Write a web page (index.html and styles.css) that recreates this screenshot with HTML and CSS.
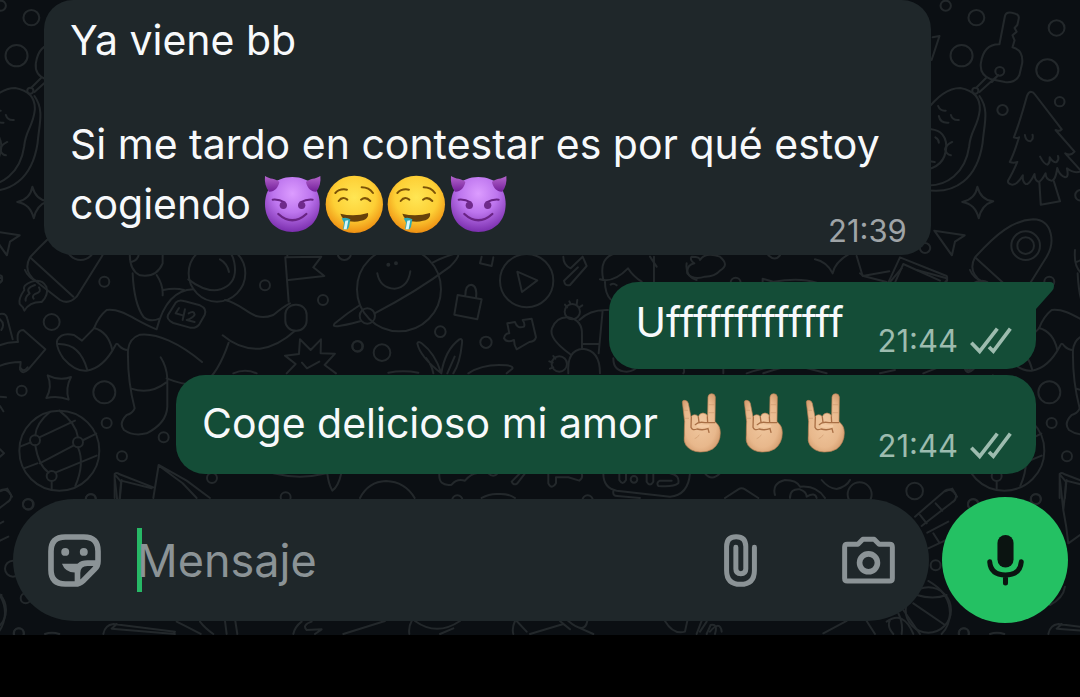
FILE: index.html
```html
<!DOCTYPE html>
<html lang="es">
<head>
  <meta charset="UTF-8">
  <meta name="viewport" content="width=device-width, initial-scale=1">
  <title>Chat</title>
  <link rel="stylesheet" href="styles.css">
</head>
<body>
  <svg class="sprites" aria-hidden="true">
    <defs>
      <radialGradient id="purple" cx="50%" cy="30%" r="70%">
        <stop offset="0" stop-color="#dc9cff"/>
        <stop offset=".5" stop-color="#bd75ee"/>
        <stop offset="1" stop-color="#7b2fae"/>
      </radialGradient>
      <linearGradient id="horn" x1="0" y1="0" x2="0" y2="1">
        <stop offset="0" stop-color="#b565cd"/>
        <stop offset="1" stop-color="#74209a"/>
      </linearGradient>
      <radialGradient id="yellow" cx="50%" cy="38%" r="62%">
        <stop offset="0" stop-color="#ffe654"/>
        <stop offset=".6" stop-color="#fdcf35"/>
        <stop offset="1" stop-color="#ee8f12"/>
      </radialGradient>
      <radialGradient id="skin" cx="48%" cy="50%" r="60%">
        <stop offset="0" stop-color="#f0c8a0"/>
        <stop offset=".7" stop-color="#e8b88c"/>
        <stop offset="1" stop-color="#d29a6c"/>
      </radialGradient>
    </defs>
    <symbol id="devil" viewBox="27 12 186 192">
      <path fill="url(#purple)" d="M118 33C172 33 200 70 200 114C200 165 165 198 118 198S36 165 36 114C36 70 64 33 118 33Z"/>
      <path fill="url(#horn)" d="M36 30C50 40 68 37 79 48C76 65 64 78 48 77C38 64 34 48 36 30ZM202 30C188 40 170 37 159 48C162 65 174 78 190 77C200 64 204 48 202 30Z"/>
      <g fill="none" stroke="#692384" stroke-width="6" stroke-linecap="round">
        <path d="M59 101Q77 99 95 109M179 101Q161 99 142 109"/>
        <path stroke-width="7" d="M76 144Q118 182 160 144"/>
      </g>
      <circle cx="91" cy="118" r="11" fill="#6f2a8b"/>
      <circle cx="146" cy="118" r="11" fill="#6f2a8b"/>
    </symbol>
    <symbol id="drool" viewBox="213 12 186 192">
      <circle cx="304" cy="115" r="86" fill="url(#yellow)"/>
      <g fill="none" stroke="#7b5207" stroke-width="6" stroke-linecap="round">
        <path d="M247 81Q260 67 282 71M326 64Q348 64 360 81M257 105Q268 90 283 101M324 101Q338 90 352 105"/>
      </g>
      <path fill="#67410a" d="M262 143Q304 153 345 141Q350 165 304 167Q268 167 262 143Z"/>
      <path fill="#2fa9b5" d="M266 157Q280 152 292 160L288 182L284 190H270L273 170Z"/>
      <path fill="#d9f7f7" d="M277 164L286 163L281 190H272Z"/>
    </symbol>
    <symbol id="horns" viewBox="6 6 186 192">
      <path fill="url(#skin)" stroke="#b98054" stroke-width="2" d="M43 45Q43 39 51 40Q59 41 61 49L69 90Q72 83 80 83Q87 83 91 89Q95 78 105 78Q114 78 119 88L120 30Q121 20 131 20Q141 20 142 30L141 104Q157 116 157 137Q157 169 134 186Q118 196 96 195Q68 194 54 175Q46 164 49 144Q49 118 50 104Z"/>
      <g fill="none" stroke="#a96f45" stroke-width="4" stroke-linecap="round">
        <path d="M70 91L69 121Q73 132 87 126M91 90L93 106M118 89L119 106M82 113Q91 103 111 107L140 107M87 126Q104 131 120 125L123 136"/>
      </g>
      <path fill="none" stroke="#f4cca5" stroke-width="8" stroke-linecap="round" d="M91 116Q105 119 120 117"/>
      <path fill="none" stroke="#cf9b70" stroke-width="2" d="M122 53H139M122 77H139M49 70H60M50 94H63M94 143Q88 153 80 155"/>
    </symbol>
    <symbol id="checks" viewBox="0 0 126 82">
      <g fill="none" stroke="currentColor" stroke-width="11">
        <path d="M4 46L29 72L82 4"/>
        <path d="M57 59L70 72L121 4"/>
      </g>
    </symbol>
  </svg>

  <main class="chat">
    <svg class="wallpaper" aria-hidden="true">
      <defs>
        <g id="doodles">
          <!-- avocado, key, tree -->
          <g transform="translate(540 0) scale(.3444 .3333)">
            <circle cx="1178" cy="17" r="15"/><circle cx="1267" cy="53" r="23"/><circle cx="1224" cy="167" r="32"/>
            <circle cx="1500" cy="84" r="23"/><circle cx="1473" cy="210" r="32"/><circle cx="1343" cy="330" r="15"/>
            <circle cx="1509" cy="305" r="14"/><circle cx="1335" cy="214" r="13"/><circle cx="1264" cy="272" r="9"/>
            <circle cx="1118" cy="744" r="15"/><circle cx="1570" cy="586" r="16"/>
            <path d="M1334 133L1350 48Q1353 35 1370 38Q1393 42 1390 56L1386 75L1378 84L1384 95L1372 106L1378 121L1372 142Q1404 150 1400 190L1392 225Q1380 250 1350 246L1310 238Q1276 225 1280 190Q1288 132 1334 133Z"/>
            <path d="M1295 234L1266 264M1330 226L1276 276M1312 246L1330 226"/>
            <path d="M1120 335Q1170 264 1220 264Q1280 275 1277 330C1272 380 1250 390 1246 440C1235 520 1180 560 1120 556"/>
            <path d="M1276 288C1305 330 1290 370 1285 430C1270 530 1210 590 1110 568M1110 388Q1178 380 1180 440Q1176 505 1110 510"/>
            <path d="M1156 318Q1162 334 1178 332M1158 348Q1162 370 1186 368M1193 345Q1198 362 1216 360M1148 412Q1158 418 1158 428M1197 426Q1178 436 1176 448Q1180 464 1193 466M1132 484L1146 486M1137 180L1160 108L1140 112"/>
            <path d="M1425 275Q1432 275 1436 282L1515 388Q1508 396 1497 390L1552 455Q1540 470 1525 460L1572 514Q1550 522 1530 505Q1536 532 1525 532Q1508 526 1502 504Q1496 545 1484 542Q1468 538 1468 520Q1454 548 1446 545Q1436 540 1436 522Q1420 556 1410 552Q1400 545 1402 526Q1385 556 1370 554Q1355 550 1360 540Q1372 520 1386 486Q1374 490 1364 486Q1376 462 1391 412Q1384 416 1376 412Q1392 370 1414 288Q1418 276 1425 275Z"/>
            <path d="M1408 405Q1410 424 1424 424Q1434 416 1430 404M1452 470Q1464 494 1474 494Q1482 485 1480 472Q1490 490 1500 486Q1508 478 1504 468M1450 548L1454 614L1510 604L1492 544"/>
            <path d="M1270 560Q1280 600 1316 604Q1282 615 1274 655Q1264 612 1226 606Q1264 598 1270 560Z"/>
            <path d="M1145 692L1233 706L1205 725L1196 766Z"/>
          </g>
          <!-- rocket -->
          <g transform="translate(880 230) scale(.3333)">
            <circle cx="437" cy="47" r="43"/><circle cx="437" cy="47" r="25"/>
            <path d="M285 82C350 10 400 -30 460 -32C520 -30 525 40 500 80L425 200Q400 225 375 210L305 155Q262 125 285 82L415 200"/>
            <path d="M290 155Q262 165 268 180Q250 205 254 222Q266 232 268 242Q284 215 320 216Q342 195 334 170Q320 145 290 155ZM300 165Q270 175 284 190Q270 200 272 212M312 172Q322 186 300 192Q290 198 296 206"/>
            <circle cx="508" cy="155" r="15"/>
          </g>
          <!-- astronaut, globe -->
          <g transform="translate(0 250) scale(.3333)">
            <circle cx="155" cy="216" r="24"/><circle cx="795" cy="106" r="15"/>
            <circle cx="969" cy="150" r="15"/><circle cx="65" cy="422" r="15"/><circle cx="313" cy="427" r="33"/>
            <circle cx="320" cy="519" r="15"/><circle cx="491" cy="562" r="15"/><circle cx="366" cy="619" r="15"/>
            <circle cx="636" cy="684" r="15"/><circle cx="273" cy="747" r="15"/><circle cx="857" cy="742" r="15"/>
            <circle cx="1072" cy="289" r="15"/><circle cx="574" cy="604" r="30"/>
            <path d="M-10 290Q20 275 54 276Q48 240 70 240L136 298L85 358Q68 375 60 358L62 336Q20 336 -10 352M0 192Q18 188 22 206L38 268M0 208Q16 222 4 240M0 440L18 442M0 468L10 484M0 598L12 610L0 620"/>
            <circle cx="651" cy="70" r="85"/><path d="M565 88Q620 130 662 118Q715 100 703 38Q698 10 682 0M660 28Q682 40 687 66"/>
            <path d="M390 0Q385 60 420 76Q470 84 488 40L488 0M396 35Q415 30 417 10M398 70Q402 160 430 200Q450 218 478 206M470 75Q490 105 488 136M490 120Q525 112 552 120M470 238Q500 120 580 118M470 238C400 210 370 175 320 180Q295 200 282 235L246 272L222 255Q185 246 172 270Q166 290 190 325Q225 365 260 362Q310 355 345 288Q350 275 358 288Q370 300 384 300"/>
            <path d="M282 234Q325 245 337 300M175 282Q240 280 262 360M606 336C540 280 470 248 420 254Q388 265 384 300Q382 390 404 475Q398 490 380 495Q355 520 372 540Q400 560 440 550Q500 520 502 470V385Q500 350 482 322M394 416Q450 435 498 398M500 385Q560 410 610 402Q655 370 686 278M668 256Q720 300 780 296Q835 288 885 242M675 150C740 165 755 220 820 195Q850 170 870 160"/>
            <path d="M527 158Q536 148 552 153L600 166Q622 176 614 195L598 223Q588 236 570 233L520 219Q498 208 504 195Z"/>
            <path d="M537 174L527 190L551 197M555 178L548 210M566 190Q582 180 584 194Q578 204 560 210L584 216"/>
            <rect x="856" y="164" width="64" height="78" rx="30"/>
            <path d="M866 155L856 22L964 20L940 52L973 78L866 90M862 20V12"/>
            <path d="M900 268L932 300L963 268L962 310L1005 311L974 345L1008 370M900 268L897 312L855 317L887 342L860 370M906 338L921 355L958 335M700 370Q735 355 770 370"/>
            <path d="M143 376Q180 394 213 381Q195 415 206 449Q175 436 139 444Q158 410 143 376Z"/>
            <circle cx="178" cy="602" r="120"/><circle cx="105" cy="571" r="15"/><circle cx="234" cy="577" r="15"/><circle cx="155" cy="678" r="15"/>
            <path d="M150 485Q108 520 106 556M178 482Q228 520 234 562M118 562L225 512M119 640L220 587M250 570L289 551M166 668L290 617M60 590L92 577M72 655L112 640M106 586Q115 645 146 668M234 592Q255 640 226 708M155 694V718"/>
            <path d="M344 744V672Q350 666 357 672L460 712M360 744L363 692L455 715M460 744L476 645L560 692L630 744M478 648L548 700L590 744M345 674L362 694"/>
            <path d="M0 724L22 716L36 740M820 670Q900 690 980 670M982 670Q985 700 997 722Q1015 710 1024 670"/>
          </g>
          <!-- planet, lock, play, puzzle, cactus -->
          <g transform="translate(340 250) scale(.3333)">
            <circle cx="177" cy="118" r="126"/><circle cx="82" cy="198" r="23"/>
            <circle cx="145" cy="44" r="3"/><circle cx="168" cy="40" r="3"/>
            <path d="M112 70Q120 114 164 116Q204 112 211 64M104 190Q230 125 330 50Q360 20 355 8Q310 20 278 38M60 165Q20 190 -15 220Q-35 240 60 214"/>
            <circle cx="301" cy="245" r="16"/><circle cx="53" cy="289" r="16"/><circle cx="126" cy="308" r="25"/><circle cx="438" cy="277" r="17"/><circle cx="13" cy="10" r="20"/>
            <path d="M353 135L425 148L412 208L343 194ZM376 137Q376 104 394 104Q413 108 408 145M425 20L420 40L455 48L460 22"/>
            <circle cx="560" cy="92" r="80"/><path d="M532 65L592 91L546 126Z"/>
            <path d="M670 20Q670 45 692 55L728 20L740 48L690 105Q675 110 672 92L714 52"/>
            <path d="M502 220L525 216Q532 238 552 230Q556 222 548 210L575 206L588 262Q585 275 568 276L530 298Q522 285 522 270Q500 280 492 265Q495 250 508 250Z"/>
            <path d="M304 370Q240 320 232 280Q235 272 245 280Q285 310 304 370Q315 300 358 268Q368 264 366 280Q360 340 340 370M258 324Q275 345 280 370M344 320L322 370M145 368Q190 360 235 368M385 370Q430 340 500 346Q525 350 515 358L500 370"/>
            <circle cx="697" cy="185" r="23"/><path d="M688 154L692 162M712 150L710 164M727 166L718 172M675 164L681 172"/>
            <path d="M690 312Q625 265 636 235Q650 200 685 202Q728 210 726 255V295M718 210Q750 178 804 180M788 182L776 310M726 282H776M685 370Q680 300 728 296Q780 300 780 370"/>
            <circle cx="658" cy="342" r="23"/><path d="M640 318L646 326M628 334L638 338M630 356L640 352M820 325Q820 365 860 365Q885 362 892 350M790 90Q775 20 830 10M780 88Q820 100 864 55Q880 80 905 95M942 95V20M795 95Q795 130 812 148M812 104Q820 98 830 106M1040 40Q1035 80 1070 90M930 20L950 50"/>
          </g>
          <!-- strip under the first message -->
          <g transform="translate(560 250) scale(.3333)">
            <path d="M395 20Q420 20 420 30Q435 5 480 20Q510 45 480 62Q465 80 435 80Q400 92 382 70Q380 45 403 40Q388 30 395 20ZM765 28Q800 35 818 70Q825 35 870 10M890 18L908 78L988 64M985 98L1020 22L1160 78Q1165 88 1155 98M1005 98L1030 42L1140 92M608 98V86L640 95Q720 82 770 98"/>
            <circle cx="527" cy="98" r="15"/><path d="M625 16Q645 35 660 16"/>
          </g>
          <g transform="translate(600 270) scale(.3333)">
            <path d="M780 10L790 18L860 36M905 -5L870 36M950 0L1040 25Q1045 32 1035 38M1110 0Q1120 25 1150 36M250 292Q255 305 250 310M370 292V310M440 310Q520 280 610 292L680 310M490 310Q520 300 550 292M840 310L885 300M970 310L1015 292M1095 292Q1105 310 1118 292"/>
          </g>
          <!-- strips around the composer -->
          <g transform="translate(330 450) scale(.3333)">
            <path d="M90 144Q115 95 168 93Q225 95 254 144M328 70Q325 110 365 104Q380 85 405 92Q425 70 440 70M475 70Q490 85 503 70M570 70L545 95Q550 108 562 100L585 70M655 70V100Q665 120 678 100V82H715L748 92Q760 85 755 70M820 70Q820 115 860 122L1020 140Q1075 135 1080 70M850 124Q848 138 862 138L930 144M868 70V90Q878 108 888 90V70M950 70V95Q960 112 970 95V70M1020 70Q1050 75 1045 100Q1030 112 985 108Q978 98 990 92L1025 92M1125 70Q1145 95 1170 70M455 144Q480 130 505 132Q535 130 555 144"/>
            <circle cx="912" cy="88" r="10"/><circle cx="382" cy="152" r="16"/><circle cx="773" cy="152" r="16"/>
            <path d="M40 552L165 513M245 513Q235 530 238 552M255 513Q320 560 390 513M330 552L370 535M555 513Q545 535 550 552M560 513L590 545M600 552L700 522L720 538L690 513M715 513Q765 555 772 513M740 530L790 552M1005 513Q1030 555 1065 545L1072 513M1100 552L1115 513M1130 552L1142 525Q1165 520 1155 552"/>
          </g>
          <g transform="translate(0 480) scale(.3333)">
            <circle cx="85" cy="73" r="16"/><circle cx="39" cy="266" r="24"/><circle cx="77" cy="355" r="15"/><circle cx="57" cy="460" r="15"/><circle cx="-50" cy="390" r="68"/>
            <path d="M310 462Q315 435 340 432L525 455L520 462M350 432L335 446L525 462M530 425Q580 450 602 462M600 425Q615 445 640 462M675 423L680 462M706 423L712 462M880 462Q885 440 905 425M935 425Q905 435 920 450L965 448L945 462M135 462Q155 454 178 462"/>
          </g>
          <g transform="translate(700 480) scale(.3333)">
            <circle cx="644" cy="33" r="25"/><circle cx="707" cy="256" r="15"/><circle cx="1007" cy="58" r="15"/><circle cx="819" cy="73" r="15"/><circle cx="791" cy="460" r="15"/><circle cx="479" cy="43" r="36"/>
            <path d="M75 54L115 28Q125 22 135 28L175 54M225 45Q215 10 255 0Q290 0 300 20Q350 15 375 54M270 54Q270 25 300 28Q320 35 320 50Q345 35 350 54M365 0Q385 25 410 27Q440 20 450 0"/>
            <path d="M645 110L735 32Q755 22 768 45Q770 60 755 68L665 138M660 105L680 130M707 70L727 92M682 158L745 125M685 205L760 170M700 160L718 188"/>
            <path d="M685 303Q750 340 750 400Q748 440 725 462M650 345Q700 360 740 345M640 370L735 435M610 390L660 462M570 420Q560 440 580 462M595 400Q610 430 605 462M560 425Q610 390 640 462M370 460L440 423M500 423L525 462M0 455L20 425M30 455Q60 420 65 455"/>
            <path d="M1080 0L1090 90Q1100 140 1105 190L1140 165M1100 0L1090 90M1095 320Q1090 355 1050 375"/>
          </g>
        </g>
      </defs>
      <use href="#doodles"/>
      <use href="#doodles" x="-945"/>
      <use href="#doodles" x="945"/>
    </svg>

    <section class="messages">
      <article class="bubble incoming">
        <p class="text">Ya viene bb<br><br>Si me tardo en contestar es por qué estoy<br>cogiendo <svg class="emoji" role="img" aria-label="😈"><use href="#devil"/></svg><svg class="emoji" role="img" aria-label="🤤"><use href="#drool"/></svg><svg class="emoji" role="img" aria-label="🤤"><use href="#drool"/></svg><svg class="emoji" role="img" aria-label="😈"><use href="#devil"/></svg></p>
        <div class="meta"><time>21:39</time></div>
      </article>

      <article class="bubble outgoing first">
        <svg class="tail" viewBox="0 0 18 30" aria-hidden="true"><path d="M0 0H14Q18 0 18 4Q18 7 16 9L0 27Z"/></svg>
        <p class="text">Ufffffffffffff</p>
        <div class="meta"><time>21:44</time><svg class="checks" role="img" aria-label="Entregado"><use href="#checks"/></svg></div>
      </article>

      <article class="bubble outgoing">
        <p class="text">Coge delicioso mi amor <svg class="emoji" role="img" aria-label="🤘🏼"><use href="#horns"/></svg><svg class="emoji" role="img" aria-label="🤘🏼"><use href="#horns"/></svg><svg class="emoji" role="img" aria-label="🤘🏼"><use href="#horns"/></svg></p>
        <div class="meta"><time>21:44</time><svg class="checks" role="img" aria-label="Entregado"><use href="#checks"/></svg></div>
      </article>
    </section>

    <form class="footer">
      <div class="composer">
        <button type="button" class="icon-btn" aria-label="Stickers">
          <svg viewBox="0 0 160 160" fill="none" stroke="currentColor" stroke-width="17" stroke-linejoin="round">
            <path d="M52 9H108Q151 9 151 52V82Q151 96 141 106L106 141Q96 151 82 151H52Q9 151 9 108V52Q9 9 52 9Z"/>
            <path d="M89 151V118Q89 88 119 88H151"/>
            <circle cx="52" cy="54" r="12" fill="currentColor" stroke="none"/>
            <circle cx="108" cy="54" r="12" fill="currentColor" stroke="none"/>
            <path fill="currentColor" stroke="none" d="M42 90H104L88 116Q54 120 42 90Z"/>
          </svg>
        </button>
        <input class="message-input" type="text" placeholder="Mensaje" aria-label="Mensaje">
        <div class="actions">
          <button type="button" class="icon-btn" aria-label="Adjuntar">
            <svg viewBox="0 0 160 160" fill="none" stroke="currentColor" stroke-width="15" stroke-linecap="round">
              <path d="M122 40V110Q122 152 80 152T38 110V38Q38 8 67 8T96 38V106Q96 120 81 120T66 106V40"/>
            </svg>
          </button>
          <button type="button" class="icon-btn" aria-label="Cámara">
            <svg viewBox="0 0 160 160" fill="none" stroke="currentColor" stroke-width="15" stroke-linejoin="round">
              <path d="M16 31H48L63 16H97L112 31H144Q152 31 152 39V134Q152 142 144 142H16Q8 142 8 134V39Q8 31 16 31Z"/>
              <circle cx="80" cy="87" r="27" stroke-width="17"/>
            </svg>
          </button>
        </div>
      </div>
      <button type="button" class="mic-btn" aria-label="Mensaje de voz">
        <svg viewBox="0 0 110 152" aria-hidden="true">
          <rect x="31" y="0" width="48" height="97" rx="24" fill="currentColor"/>
          <path d="M8 80Q11 119 55 119T102 80M55 119V143" fill="none" stroke="currentColor" stroke-width="15" stroke-linecap="round"/>
        </svg>
      </button>
    </form>
  </main>
</body>
</html>
```
FILE: styles.css
```css
* {
  box-sizing: border-box;
}

body {
  margin: 0;
  background: #000;
  font-family: Inter, "Liberation Sans", sans-serif;
}

.sprites {
  position: absolute;
  width: 0;
  height: 0;
}

.chat {
  position: relative;
  overflow: hidden;
  background: #0b0f13;
}

.wallpaper {
  position: absolute;
  top: 0;
  left: 0;
  width: 100%;
  height: 100%;
  fill: none;
  stroke: #23282b;
  stroke-width: 6;
  stroke-linejoin: round;
  stroke-linecap: round;
}

.messages {
  position: relative;
  display: flex;
  flex-direction: column;
  align-items: flex-start;
  padding: 0 44px;
}

.bubble {
  max-width: 89.4%;
  padding: 14px 24px 12px 26px;
  border-radius: 29px;
  color: #f7f9fb;
}

.incoming {
  display: grid;
  width: 89.4%;
  margin-bottom: 27px;
  background: #1f272a;
}

.incoming .text,
.incoming .meta {
  grid-area: 1 / 1;
}

.incoming .meta {
  margin-bottom: -4px;
}

.outgoing {
  position: relative;
  display: flex;
  gap: 22px;
  align-self: flex-end;
  justify-content: space-between;
  background: #144d37;
}

.first {
  min-width: 43%;
  margin-bottom: 6px;
  border-top-right-radius: 0;
}

.tail {
  position: absolute;
  top: 0;
  left: 100%;
  width: 18px;
  height: 30px;
  fill: #144d37;
}

.text {
  margin: 0;
  padding-bottom: 9px;
  font-size: 41px;
  line-height: 52px;
}

.emoji {
  width: 62px;
  height: 64px;
  vertical-align: -15px;
}

.meta {
  display: flex;
  gap: 12px;
  align-items: center;
  align-self: end;
  justify-self: end;
  color: #9fa4a7;
  font-size: 31px;
  line-height: 32px;
}

.outgoing .meta {
  color: #9dbcaf;
}

.checks {
  width: 42px;
  height: 28px;
}

.footer {
  position: relative;
  display: flex;
  gap: 13px;
  align-items: center;
  padding: 23px 12px 12px 13px;
}

.composer {
  display: flex;
  flex: 1;
  gap: 36px;
  align-items: center;
  min-width: 0;
  height: 122px;
  padding: 0 34px 0 35px;
  border-radius: 61px;
  background: #1f272a;
}

.icon-btn {
  flex: none;
  padding: 0;
  border: 0;
  background: none;
  color: #8b9396;
}

.icon-btn svg {
  display: block;
  width: 53px;
  height: 53px;
}

.message-input {
  flex: 1;
  min-width: 0;
  height: 64px;
  padding: 0;
  border: 0;
  outline: 0;
  background: linear-gradient(#27b866, #27b866) left / 5px 100% no-repeat;
  color: #f7f9fb;
  font: 45px Inter, "Liberation Sans", sans-serif;
}

.message-input::placeholder {
  color: #8b9396;
  opacity: 1;
}

.actions {
  display: flex;
  gap: 75px;
}

.mic-btn {
  display: flex;
  flex: none;
  align-items: center;
  justify-content: center;
  width: 126px;
  height: 126px;
  padding: 0;
  border: 0;
  border-radius: 50%;
  background: #24c163;
  color: #0b1411;
}

.mic-btn svg {
  width: 37px;
  height: 51px;
}
```
